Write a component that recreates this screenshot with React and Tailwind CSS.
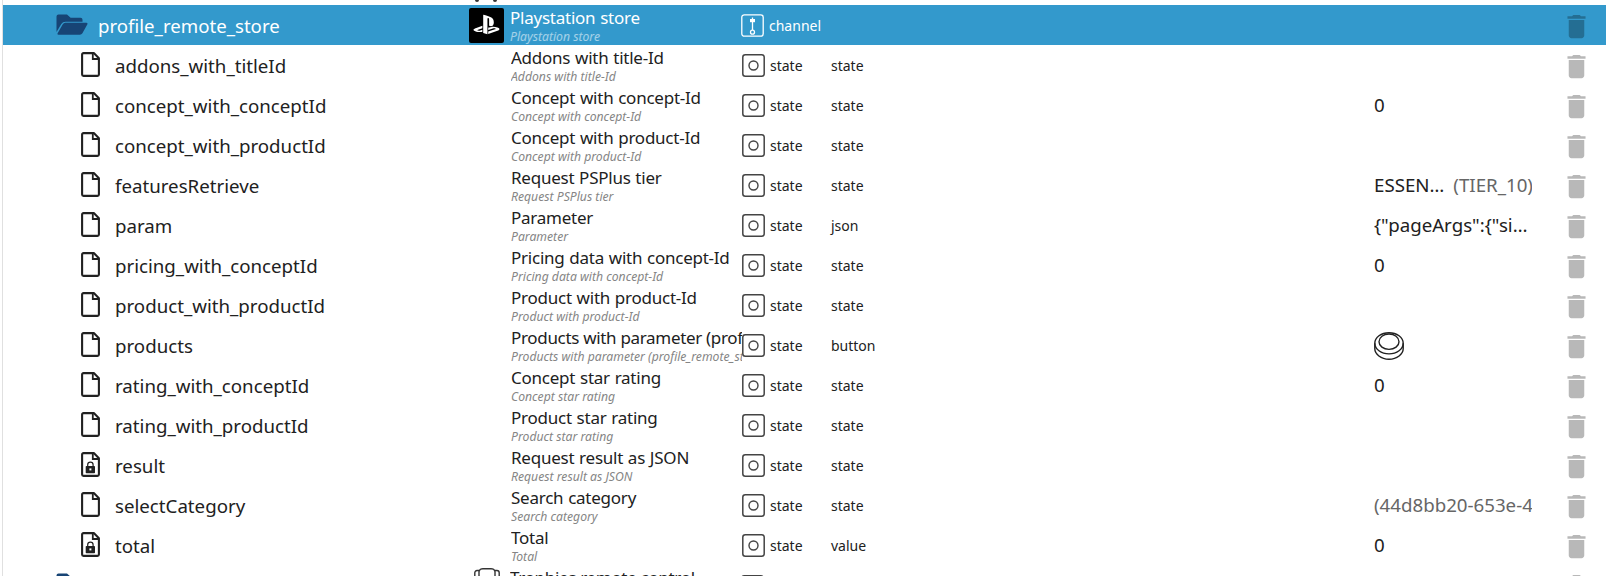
import React from "react";

const rows = [
  { id: "addons_with_titleId", name: "Addons with title-Id", role: "state" },
  { id: "concept_with_conceptId", name: "Concept with concept-Id", role: "state", value: "0" },
  { id: "concept_with_productId", name: "Concept with product-Id", role: "state" },
  { id: "featuresRetrieve", name: "Request PSPlus tier", role: "state", value: "ESSEN…", note: "(TIER_10)" },
  { id: "param", name: "Parameter", role: "json", value: '{"pageArgs":{"si…' },
  { id: "pricing_with_conceptId", name: "Pricing data with concept-Id", role: "state", value: "0" },
  { id: "product_with_productId", name: "Product with product-Id", role: "state" },
  { id: "products", name: "Products with parameter (profile_remote_store)", role: "button", button: true, tight: true },
  { id: "rating_with_conceptId", name: "Concept star rating", role: "state", value: "0" },
  { id: "rating_with_productId", name: "Product star rating", role: "state" },
  { id: "result", name: "Request result as JSON", role: "state", locked: true },
  { id: "selectCategory", name: "Search category", role: "state", note: "(44d8bb20-653e-4c1f)" },
  { id: "total", name: "Total", role: "value", value: "0", locked: true },
];

function FolderIcon() {
  return (
    <svg className="h-[22px] w-8 shrink-0 fill-[#174475]" viewBox="0 0 32 22">
      <path d="M2.500 0.500h8.500l3.600 3.200h9.900a2 2 0 0 1 2 2v2.100H9.500a5 5 0 0 0-4.200 2.300L0.500 18V2.500A2 2 0 0 1 2.500 .5z" />
      <path d="M9.500 8.800h21a1 1 0 0 1 .9 1.500l-5 8.900a3 3 0 0 1-2.500 1.500H2.400a1 1 0 0 1-.8-1.500L6.800 10.300A3 3 0 0 1 9.500 8.800z" />
    </svg>
  );
}

function FileIcon({ locked }) {
  return (
    <svg className="h-[25px] w-[19px] shrink-0 text-[#212121]" viewBox="0 0 19 25" fill="none" stroke="currentColor">
      <path strokeWidth="2.100" strokeLinejoin="round" d="M2.500 1.100h10.300L17.900 6.200v16.300a1.400 1.400 0 0 1-1.400 1.400h-14a1.400 1.400 0 0 1-1.400-1.400v-20A1.400 1.400 0 0 1 2.500 1.100z" />
      <path strokeWidth="1.800" d="M11.800 1.500v5.500h5.700" />
      {locked && (
        <g>
          <rect x="4.700" y="14" width="9.300" height="7.300" rx="0.800" fill="currentColor" stroke="none" />
          <path strokeWidth="1.200" d="M6.700 15v-2.200a2.700 2.700 0 0 1 5.400 0V15" />
          <rect x="8.400" y="16.400" width="2" height="2" fill="white" stroke="none" />
        </g>
      )}
    </svg>
  );
}

function StateIcon() {
  return (
    <svg className="size-[23px] shrink-0 text-[#444]" viewBox="0 0 23 23" fill="none" stroke="currentColor">
      <rect x="0.800" y="0.800" width="21.400" height="21.400" rx="2.500" strokeWidth="1.500" />
      <circle cx="11.500" cy="11.500" r="4.500" strokeWidth="1.400" />
    </svg>
  );
}

function ChannelIcon() {
  return (
    <svg className="size-[23px] shrink-0 text-white" viewBox="0 0 23 23" fill="none" stroke="currentColor">
      <rect x="0.800" y="0.800" width="21.400" height="21.400" rx="2.500" strokeWidth="1.300" />
      <path strokeWidth="1.300" d="M11.500 3.500v12.500" />
      <rect x="9" y="5" width="5" height="3.200" fill="currentColor" stroke="none" />
      <circle cx="11.500" cy="18.200" r="2" strokeWidth="1.300" />
    </svg>
  );
}

function PlaystationLogo() {
  return (
    <svg className="size-[35px] shrink-0" viewBox="0 0 35 35">
      <rect width="35" height="35" rx="2" fill="black" />
      <g fill="white" transform="translate(4.500 4.200) scale(1.080 1.030)">
        <path d="M8.985 2.596v17.548l3.915 1.261V6.688c0-.69.304-1.151.794-.991.636.181.760.814.760 1.505v5.876c2.441 1.193 4.362-.002 4.362-3.153 0-3.237-1.126-4.675-4.438-5.827-1.307-.448-3.728-1.186-5.391-1.502h-.002zm4.656 16.242 6.296-2.275c.715-.258.826-.625.246-.818-.586-.192-1.637-.139-2.357.123l-4.205 1.499v-2.385l.240-.085s1.201-.420 2.913-.615c1.696-.180 3.785.029 5.437.661 1.848.601 2.041 1.472 1.576 2.072s-1.622 1.036-1.622 1.036l-8.544 3.107v-2.297l.020-.023zM1.807 18.600c-1.900-.545-2.214-1.668-1.352-2.321.801-.585 2.159-1.051 2.159-1.051l5.616-2.013v2.313L4.205 17c-.705.271-.825.632-.239.826.586.195 1.637.150 2.343-.120L8.247 17v2.074c-.120.030-.256.044-.390.073-1.939.331-3.996.196-6.038-.479l-.012-.068z" />
      </g>
    </svg>
  );
}

function RoundButtonIcon() {
  return (
    <svg className="h-7 w-[30px] shrink-0" viewBox="0 0 30 28" fill="none" stroke="#212121" strokeWidth="1.400">
      <ellipse cx="15" cy="11.300" rx="14.200" ry="10.600" />
      <ellipse cx="15" cy="9.700" rx="10" ry="7.700" />
      <path d="M.8 11.300v5.500C.8 22 7 27.200 15 27.200s14.200-5.200 14.200-10.400V11.300" />
    </svg>
  );
}

function ControllerIcon() {
  return (
    <svg className="h-6 w-[26px] shrink-0" viewBox="0 0 26 24" fill="none" stroke="#333" strokeWidth="1.400">
      <path d="M5 3.500C6 .8 7 .8 9 .8h8c2 0 3 0 4 2.700v12H5z" />
      <path d="M5 2.500H3A2.200 2.200 0 0 0 .8 4.700V14a8 8 0 0 0 4.200 5M21 2.500h2a2.200 2.200 0 0 1 2.200 2.200V14a8 8 0 0 1-4.200 5" />
    </svg>
  );
}

function TrashIcon() {
  return (
    <svg className="size-[31px] shrink-0 fill-black/28" viewBox="0 0 24 24">
      <path d="M6 19c0 1.100.9 2 2 2h8c1.100 0 2-.9 2-2V7H6v12zM19 4h-3.500l-1-1h-5l-1 1H5v2h14V4z" />
    </svg>
  );
}

function NameCell({ name, light, tight }) {
  const title = tight ? "tracking-[-0.320px]" : "tracking-[-0.240px] [word-spacing:0.600px]";
  const subtitle = light ? "text-white/55" : "text-[#858585]";
  return (
    <div className="h-10 min-w-0 grow overflow-hidden whitespace-nowrap">
      <div className={"h-[25px] text-[17px] leading-[25px] " + title}>{name}</div>
      <div className={"text-[12.200px] leading-[13px] italic " + subtitle}>{name}</div>
    </div>
  );
}

export default function App() {
  return (
    <div className="h-[576px] w-[1606px] overflow-hidden bg-white pl-[2px] font-['Noto_Sans','Open_Sans',sans-serif] text-[#212121]">
      <div className="h-full overflow-hidden border-l border-[#e0e0e0]">
        <div className="flex h-[5px] items-start pl-[472px]">
          <span className="h-[2px] w-1 rounded-b bg-[#333]" />
          <span className="ml-[14px] h-[2px] w-1 rounded-b bg-[#333]" />
        </div>
        <div className="flex h-10 items-center bg-[#3399cc] text-white">
          <div className="flex w-[466px] shrink-0 items-center pl-[53px]">
            <FolderIcon />
            <span className="ml-[10px] pt-[2px] text-[18.650px]">profile_remote_store</span>
          </div>
          <div className="flex w-[272px] shrink-0 items-center gap-[6px]">
            <PlaystationLogo />
            <NameCell name="Playstation store" light />
          </div>
          <div className="flex w-[820px] shrink-0 items-center gap-[5px] pt-px">
            <ChannelIcon />
            <span className="text-[14px]">channel</span>
          </div>
          <div className="pt-[3px]">
            <TrashIcon />
          </div>
        </div>
        {rows.map((r) => (
          <div key={r.id} className="flex h-10 items-center">
            <div className="flex w-[508px] shrink-0 items-center pl-[78px]">
              <div className="pb-px">
                <FileIcon locked={r.locked} />
              </div>
              <span className="ml-[15px] pt-[2px] text-[18.700px]">{r.id}</span>
            </div>
            <div className="flex w-[231px] shrink-0">
              <NameCell name={r.name} tight={r.tight} />
            </div>
            <div className="flex w-[89px] shrink-0 items-center gap-[5px] pt-px text-[14px]">
              <StateIcon />
              <span>state</span>
            </div>
            <div className="w-[543px] shrink-0 pt-px text-[14px]">{r.role}</div>
            <div className="flex w-[158px] shrink-0 gap-[9px] overflow-hidden pt-px text-[18.700px] whitespace-nowrap">
              {r.value && <span>{r.value}</span>}
              {r.note && <span className="text-[#666]">{r.note}</span>}
              {r.button && <RoundButtonIcon />}
            </div>
            <div className="ml-[29px] pt-[3px]">
              <TrashIcon />
            </div>
          </div>
        ))}
        <div className="flex h-10 items-start">
          <div className="w-[471px] shrink-0 pt-[8px] pl-[53px]">
            <FolderIcon />
          </div>
          <div className="flex w-[267px] shrink-0">
            <div className="w-9 shrink-0 pt-[3px]">
              <ControllerIcon />
            </div>
            <NameCell name="Trophies remote control" tight />
          </div>
          <div className="w-[820px] shrink-0 pt-[10px]">
            <StateIcon />
          </div>
          <div className="pt-[6px]">
            <TrashIcon />
          </div>
        </div>
      </div>
    </div>
  );
}
